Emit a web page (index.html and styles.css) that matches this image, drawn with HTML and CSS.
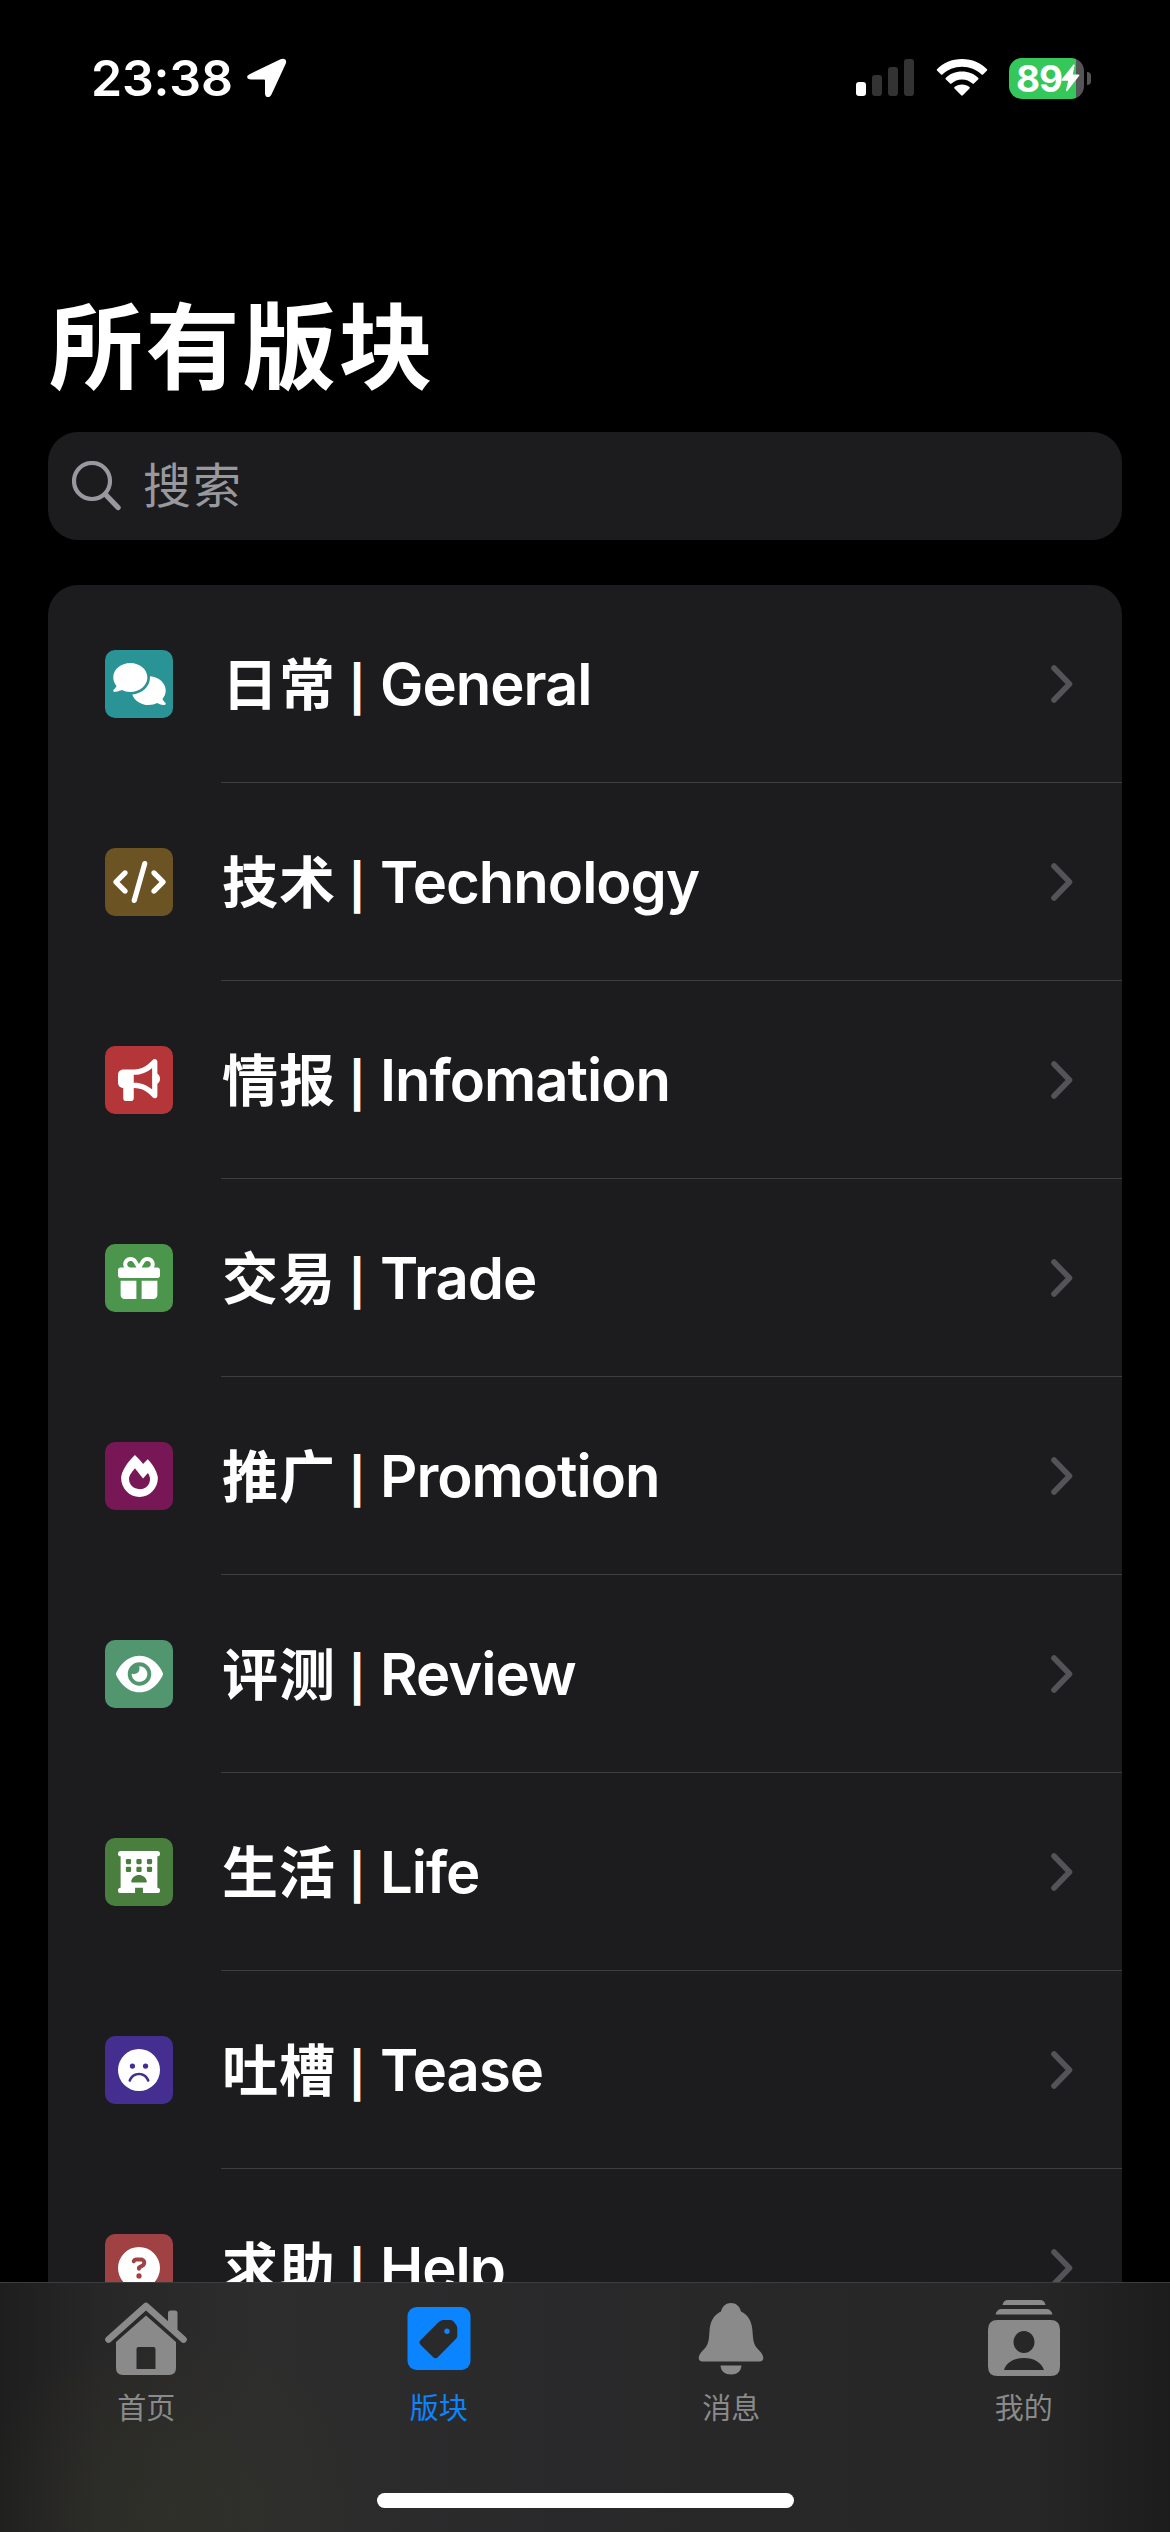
FILE: index.html
```html
<!DOCTYPE html>
<html lang="zh-CN">
<head>
<meta charset="utf-8">
<title>所有版块</title>
<link rel="stylesheet" href="styles.css">
</head>
<body>
<svg class="sprite" aria-hidden="true">
  <symbol id="chevron" viewBox="0 0 22 38"><path d="M3 3 18.500 19 3 35" fill="none" stroke="currentColor" stroke-width="5.600" stroke-linecap="round" stroke-linejoin="round"/></symbol>
</svg>
<div class="screen">
  <header class="status">
    <div class="clock">
      <span class="time">23:38</span>
      <svg class="location" width="40" height="40" viewBox="0 0 40 40"><path d="M2.500 16.200 33.500 1.200C37.500-.600 40.500 2.200 38.600 6L24.600 36.200C22.800 40.400 18 39.800 18 35.400V22.500Q18 21.600 17 21.600H4.200C-.400 21.600-1.200 18 2.500 16.200Z" fill="#fff"/></svg>
    </div>
    <div class="indicators">
      <svg class="signal" width="58" height="38" viewBox="0 0 58 38"><rect y="23" width="10" height="14" rx="3" fill="#fff"/><g fill="#333"><rect x="16" y="16" width="10" height="21" rx="3"/><rect x="32" y="8" width="10" height="29" rx="3"/><rect x="48" width="10" height="37" rx="3"/></g></svg>
      <svg class="wifi" width="52" height="38" viewBox="0 0 52 38" fill="#fff"><path d="M26 0C36.200 0 45 4 51 10.200Q51.600 10.900 51 11.500L47 15.500Q46.300 16.100 45.600 15.500C40.500 10.700 33.600 7.800 26 7.800S11.500 10.700 6.400 15.500Q5.700 16.100 5 15.500L1 11.500Q.400 10.900 1 10.200C7 4 15.800 0 26 0Z"/><path d="M26 12.600C32.600 12.600 38.300 15 42.300 19Q42.900 19.700 42.300 20.300L37.900 24.600Q37.200 25.200 36.500 24.600C33.700 22.100 30.200 20.500 26 20.500S18.300 22.100 15.500 24.600Q14.800 25.200 14.100 24.600L9.700 20.300Q9.100 19.700 9.700 19C13.700 15 19.400 12.600 26 12.600Z"/><path d="M26 25.400C29 25.400 31.600 26.400 33.500 28.100Q34.200 28.800 33.500 29.500L26.800 36.300Q26 37 25.200 36.300L18.500 29.500Q17.800 28.800 18.500 28.100C20.400 26.400 23 25.400 26 25.400Z"/></svg>
      <div class="battery">
        <div class="cell"><span class="level">89</span><svg class="bolt" width="19" height="28" viewBox="0 0 19 28"><path d="M12.500.500Q14 0 13.600 1.600L11.800 10.500H17.200Q19 10.600 18 12.100L6.500 26.800Q4.800 28.200 5.100 26L7.200 16.700H1.500Q-.100 16.500 1 15Z" fill="#fff"/></svg></div>
        <span class="nub"></span>
      </div>
    </div>
  </header>

  <main class="content">
    <h1 class="title">所有版块</h1>
    <div class="search">
      <svg width="50" height="50" viewBox="0 0 50 50" fill="none" stroke="#98989f" stroke-linecap="round"><circle cx="20" cy="20" r="18" stroke-width="4.200"/><path d="M33.500 33.500 46 46.500" stroke-width="5.400"/></svg>
      <span class="placeholder">搜索</span>
    </div>

    <ul class="list">
      <li class="row">
        <span class="tile teal"><svg width="53" height="42" viewBox="0 0 640 512"><path d="M208 352c114.900 0 208-78.800 208-176S322.900 0 208 0S0 78.800 0 176c0 38.600 14.700 74.300 39.600 103.400c-3.500 9.400-8.700 17.700-14.200 24.700c-4.800 6.200-9.700 11-13.300 14.300c-1.800 1.600-3.300 2.900-4.300 3.700l-1.300 1C1 327.200-1.400 334.400.8 340.900S9.100 352 16 352c21.800 0 43.800-5.600 62.100-12.500c9.200-3.500 17.800-7.400 25.300-11.400C134.100 343.300 169.800 352 208 352zM448 176c0 112.300-99.100 196.900-216.500 207C255.800 457.400 336.400 512 432 512c38.200 0 73.900-8.700 104.700-23.900c7.500 4 16 7.900 25.200 11.400c18.300 6.900 40.300 12.500 62.100 12.500c6.900 0 13.100-4.500 15.200-11.100c2.100-6.600-.2-13.800-5.800-17.900l-1.300-1c-1-.8-2.500-2-4.300-3.700c-3.600-3.300-8.500-8.100-13.300-14.300c-5.500-7-10.700-15.400-14.200-24.700c24.900-29 39.600-64.700 39.600-103.400c0-92.800-84.900-168.900-192.600-175.500c.4 5.100.6 10.300.6 15.500z"/></svg></span>
        <div class="cellbody"><span class="label"><span class="zh">日常</span> <span class="bar">|</span> General</span><svg class="chev"><use href="#chevron"/></svg></div>
      </li>
      <li class="row">
        <span class="tile brown"><svg width="53" height="42" viewBox="0 0 640 512"><path d="M392.800 1.200c-17-4.900-34.700 5-39.600 22l-128 448c-4.900 17 5 34.700 22 39.600s34.700-5 39.600-22l128-448c4.900-17-5-34.700-22-39.600zm80.600 120.100c-12.500 12.500-12.500 32.800 0 45.300L562.700 256l-89.400 89.400c-12.500 12.500-12.500 32.800 0 45.300s32.800 12.500 45.300 0l112-112c12.500-12.500 12.500-32.800 0-45.300l-112-112c-12.500-12.500-32.800-12.500-45.300 0zm-306.700 0c-12.500-12.500-32.800-12.500-45.300 0l-112 112c-12.500 12.500-12.500 32.800 0 45.300l112 112c12.500 12.500 32.800 12.500 45.300 0s12.500-32.800 0-45.300L77.300 256l89.400-89.400c12.500-12.500 12.500-32.800 0-45.300z"/></svg></span>
        <div class="cellbody"><span class="label"><span class="zh">技术</span> <span class="bar">|</span> Technology</span><svg class="chev"><use href="#chevron"/></svg></div>
      </li>
      <li class="row">
        <span class="tile red"><svg width="42" height="42" viewBox="0 0 512 512"><path d="M480 32c0-12.900-7.800-24.600-19.800-29.600s-25.700-2.200-34.900 6.900L381.700 53c-48 48-113.100 75-181 75H64c-35.300 0-64 28.700-64 64v96c0 35.300 28.700 64 64 64v128c0 17.700 14.300 32 32 32h64c17.700 0 32-14.300 32-32V352h8.700c67.900 0 133 27 181 75l43.600 43.600c9.200 9.200 22.900 11.900 34.900 6.900s19.800-16.600 19.800-29.600V300.400c18.600-8.800 32-32.500 32-60.400s-13.400-51.600-32-60.400V32zm-64 76.700V371.300C357.200 317.800 280.500 288 200.700 288H192V192h8.700c79.800 0 156.500-29.800 215.300-83.300z"/></svg></span>
        <div class="cellbody"><span class="label"><span class="zh">情报</span> <span class="bar">|</span> Infomation</span><svg class="chev"><use href="#chevron"/></svg></div>
      </li>
      <li class="row">
        <span class="tile green"><svg width="42" height="42" viewBox="0 0 512 512"><path d="M190.500 68.800L225.300 128H152c-22.100 0-40-17.900-40-40s17.900-40 40-40h2.200c14.900 0 28.800 7.900 36.300 20.800zM64 88c0 14.400 3.500 28 9.600 40H32c-17.700 0-32 14.300-32 32v64c0 17.700 14.300 32 32 32H480c17.700 0 32-14.300 32-32V160c0-17.700-14.300-32-32-32H438.400c6.100-12 9.600-25.600 9.600-40c0-48.600-39.400-88-88-88h-2.200c-31.900 0-61.500 16.900-77.700 44.400L256 85.500l-24.100-41C215.700 16.900 186.100 0 154.200 0H152C103.400 0 64 39.400 64 88zm336 0c0 22.100-17.900 40-40 40H286.700l34.800-59.200C329.100 55.900 342.900 48 357.800 48H360c22.100 0 40 17.900 40 40zM32 288V464c0 26.500 21.500 48 48 48H224V288H32zM288 512H432c26.500 0 48-21.500 48-48V288H288V512z"/></svg></span>
        <div class="cellbody"><span class="label"><span class="zh">交易</span> <span class="bar">|</span> Trade</span><svg class="chev"><use href="#chevron"/></svg></div>
      </li>
      <li class="row">
        <span class="tile magenta"><svg width="37" height="42" viewBox="0 0 448 512"><path d="M323.560 51.200c-20.800 19.300-39.580 39.590-56.220 59.970C240.080 73.620 206.280 35.530 168 0 69.740 91.170 0 209.960 0 281.600 0 408.850 100.290 512 224 512s224-103.150 224-230.400c0-53.270-51.980-163.140-124.440-230.400zm-19.470 340.650C282.430 407.010 255.720 416 226.860 416 154.710 416 96 368.260 96 290.750c0-38.610 24.310-72.630 72.790-130.750 6.930 7.980 98.830 125.340 98.830 125.340l58.630-66.880c4.140 6.850 7.910 13.550 11.270 19.970 27.350 52.190 15.810 118.970-33.430 153.420z"/></svg></span>
        <div class="cellbody"><span class="label"><span class="zh">推广</span> <span class="bar">|</span> Promotion</span><svg class="chev"><use href="#chevron"/></svg></div>
      </li>
      <li class="row">
        <span class="tile mint"><svg width="47" height="42" viewBox="0 0 576 512"><path d="M288 32c-80.800 0-145.500 36.800-192.600 80.600C48.600 156 17.300 208 2.500 243.700c-3.300 7.900-3.300 16.700 0 24.600C17.300 304 48.600 356 95.400 399.400C142.500 443.200 207.200 480 288 480s145.500-36.800 192.600-80.600c46.800-43.500 78.100-95.400 93-131.100c3.300-7.900 3.300-16.700 0-24.600c-14.900-35.700-46.200-87.700-93-131.100C433.500 68.800 368.800 32 288 32zM144 256a144 144 0 1 1 288 0 144 144 0 1 1-288 0zm144-64c0 35.300-28.700 64-64 64c-7.100 0-13.900-1.200-20.300-3.300c-5.500-1.800-11.900 1.600-11.700 7.400c.3 6.900 1.300 13.800 3.200 20.700c13.700 51.200 66.400 81.600 117.600 67.900s81.600-66.400 67.900-117.600c-11.100-41.500-47.800-69.400-88.600-71.100c-5.800-.2-9.200 6.100-7.400 11.700c2.100 6.400 3.300 13.200 3.300 20.300z"/></svg></span>
        <div class="cellbody"><span class="label"><span class="zh">评测</span> <span class="bar">|</span> Review</span><svg class="chev"><use href="#chevron"/></svg></div>
      </li>
      <li class="row">
        <span class="tile forest"><svg width="42" height="42" viewBox="0 0 512 512"><path fill-rule="evenodd" d="M32 0H480a32 32 0 0 1 0 64V448a32 32 0 0 1 0 64H304V448H208V512H32a32 32 0 0 1 0-64V64A32 32 0 0 1 32 0ZM112 96h32q16 0 16 16v32q0 16-16 16h-32q-16 0-16-16v-32q0-16 16-16ZM240 96h32q16 0 16 16v32q0 16-16 16h-32q-16 0-16-16v-32q0-16 16-16ZM368 96h32q16 0 16 16v32q0 16-16 16h-32q-16 0-16-16v-32q0-16 16-16ZM112 192h32q16 0 16 16v32q0 16-16 16h-32q-16 0-16-16v-32q0-16 16-16ZM240 192h32q16 0 16 16v32q0 16-16 16h-32q-16 0-16-16v-32q0-16 16-16ZM368 192h32q16 0 16 16v32q0 16-16 16h-32q-16 0-16-16v-32q0-16 16-16ZM176 384H336c8.800 0 17.200-7.200 15.100-15.800C340 320 302.200 292 256 292S172 320 160.900 368.200C158.800 376.800 167.200 384 176 384Z"/></svg></span>
        <div class="cellbody"><span class="label"><span class="zh">生活</span> <span class="bar">|</span> Life</span><svg class="chev"><use href="#chevron"/></svg></div>
      </li>
      <li class="row">
        <span class="tile violet"><svg width="42" height="42" viewBox="0 0 512 512"><path fill-rule="evenodd" d="M256 512A256 256 0 1 0 256 0a256 256 0 1 0 0 512zM159.300 388.700c-2.600 8.400-11.600 13.200-20 10.500s-13.200-11.600-10.500-20C145.200 326.100 196.300 288 256 288s110.800 38.100 127.300 91.300c2.600 8.400-2.100 17.400-10.500 20s-17.400-2.100-20-10.500C340.500 349.400 302.100 320 256 320s-84.500 29.400-96.700 68.700zM144 208a32 32 0 1 1 64 0 32 32 0 1 1-64 0zm192-32a32 32 0 1 1 0 64 32 32 0 1 1 0-64z"/></svg></span>
        <div class="cellbody"><span class="label"><span class="zh">吐槽</span> <span class="bar">|</span> Tease</span><svg class="chev"><use href="#chevron"/></svg></div>
      </li>
      <li class="row">
        <span class="tile brick"><svg width="42" height="42" viewBox="0 0 512 512"><path fill-rule="evenodd" d="M256 512A256 256 0 1 0 256 0a256 256 0 1 0 0 512zM169.800 165.300c7.900-22.300 29.100-37.300 52.800-37.300h58.300c34.900 0 63.100 28.300 63.100 63.100c0 22.600-12.100 43.500-31.700 54.800L280 264.400c-.2 13-10.900 23.600-24 23.600c-13.300 0-24-10.700-24-24V250.500c0-8.600 4.600-16.500 12.100-20.800l44.300-25.400c4.700-2.700 7.600-7.700 7.600-13.100c0-8.400-6.800-15.100-15.100-15.100H222.600c-3.400 0-6.400 2.100-7.500 5.300l-.4 1.200c-4.400 12.500-18.200 19-30.600 14.600s-19-18.200-14.600-30.600l.3-1.300zM224 352a32 32 0 1 1 64 0 32 32 0 1 1-64 0z"/></svg></span>
        <div class="cellbody"><span class="label"><span class="zh">求助</span> <span class="bar">|</span> Help</span><svg class="chev"><use href="#chevron"/></svg></div>
      </li>
    </ul>
  </main>

  <footer class="bottom">
    <nav class="tabs">
      <a class="tab"><svg width="84" height="78" viewBox="0 0 84 78" fill="#8a8a8a"><path d="M4.500 41.500 42 8 79.500 41.500" fill="none" stroke="#8a8a8a" stroke-width="6.600" stroke-linecap="round" stroke-linejoin="round"/><path d="M64 30V15q0-2.500 2.500-2.500h4.500q2.500 0 2.500 2.500v21Z"/><path fill-rule="evenodd" d="M42 17.500 72 44V70q0 7-7 7H19q-7 0-7-7V44ZM34.500 49q-2 0-2 2V71H51.500V51q0-2-2-2Z"/></svg><span>首页</span></a>
      <a class="tab active"><svg width="84" height="78" viewBox="0 0 84 78"><rect x="10.500" y="9" width="63" height="63" rx="9" fill="#0a84ff"/><path d="M46.500 22H53.500Q55.500 22 57 24L59.300 27Q60.300 28.500 60.300 30.500V37.500Q60.300 39.500 58.800 41L41 59Q38.500 61.500 36 59L23.500 46.800Q21.300 44.500 23.500 42.300L42 23.800Q44 22 46.500 22Z" fill="#2a2a2b"/><circle cx="50" cy="33.300" r="2.700" fill="#0a84ff"/></svg><span>版块</span></a>
      <a class="tab"><svg width="84" height="78" viewBox="0 0 84 78" fill="#8a8a8a"><path d="M32 13.500C33.500 8 37 5 42 5s8.500 3 10 8.500C59.500 17 63 24 63.500 33 64 41 64.500 46 67.500 49.500L72 54.500C75.500 59 75 63.500 70.500 63.500H13.500C9 63.500 8.500 59 12 54.500L16.500 49.500C19.500 46 20 41 20.500 33 21 24 24.500 17 32 13.500Z"/><path d="M31.500 67.500H52.500C52 73.500 48 76.500 42 76.500S32 73.500 31.500 67.500Z"/></svg><span>消息</span></a>
      <a class="tab"><svg width="84" height="78" viewBox="0 0 84 78" fill="#8a8a8a"><path d="M20.500 7Q21.500 2 26 2H58Q62.500 2 63.500 7ZM13.500 16.500Q15 11 19.500 11H64.500Q69 11 70.500 16.500Z"/><path fill-rule="evenodd" d="M15.500 22H68.500Q78 22 78 31.500V68.500Q78 78 68.500 78H15.500Q6 78 6 68.500V31.500Q6 22 15.500 22ZM42 33C36 33 31.500 38 31.500 44S36 55 42 55 52.500 50 52.500 44 48 33 42 33ZM22 72H62C59.500 64.500 52 60 42 60S24.500 64.500 22 72Z"/></svg><span>我的</span></a>
    </nav>
    <div class="home-indicator"></div>
  </footer>
</div>
</body>
</html>
```
FILE: styles.css
```css
* { box-sizing: border-box; }

body {
  margin: 0;
  background: #000;
  color: #fff;
  font-family: Inter, "Noto Sans CJK SC", sans-serif;
}

.sprite { display: none; }

svg { display: block; flex: none; }

.screen {
  width: 1170px;
  height: 2532px;
  display: flex;
  flex-direction: column;
  overflow: hidden;
  background: #000;
}

.status {
  flex: none;
  height: 282px;
  padding: 53px 79px 0 91px;
  display: flex;
  justify-content: space-between;
  align-items: flex-start;
}

.clock, .indicators { display: flex; align-items: center; height: 50px; }

.clock { gap: 16px; }

.time {
  width: 140px;
  font-size: 50px;
  font-weight: 600;
  line-height: 50px;
  letter-spacing: -0.2px;
  white-space: nowrap;
}

.signal { margin-right: 22px; }
.wifi { margin-right: 21px; }

.battery { display: flex; align-items: center; gap: 3px; }

.cell {
  width: 75px;
  height: 41px;
  padding-left: 7px;
  display: flex;
  align-items: center;
  border-radius: 13px;
  background: linear-gradient(90deg, #34c759 67px, #555557 67px);
}

.level {
  width: 45px;
  font-size: 37px;
  font-weight: 700;
  line-height: 41px;
  letter-spacing: -1px;
}

.nub { width: 4px; height: 13px; border-radius: 0 4px 4px 0; background: #555557; }

.content { flex: 1; min-height: 0; overflow: hidden; padding: 0 48px; }

.title {
  margin: 0 0 20px;
  height: 130px;
  padding-left: 1px;
  font-size: 94px;
  font-weight: 700;
  line-height: 132px;
  letter-spacing: 2.6px;
}

.search {
  height: 108px;
  margin-bottom: 45px;
  padding: 0 24px;
  display: flex;
  align-items: center;
  gap: 21px;
  border-radius: 30px;
  background: #1c1c1e;
}

.placeholder {
  color: #98989f;
  font-size: 48px;
  line-height: 60px;
  letter-spacing: 2px;
}

.list {
  margin: 0;
  padding: 0;
  list-style: none;
  border-radius: 30px 30px 0 0;
  background: #1c1c1e;
}

.row {
  height: 198px;
  padding-left: 57px;
  display: flex;
  gap: 48px;
}

.tile {
  flex: none;
  width: 68px;
  height: 68px;
  margin-top: 65px;
  display: flex;
  align-items: center;
  justify-content: center;
  border-radius: 10px;
  fill: #fff;
}

.teal { background: #2a9396; }
.brown { background: #6c5323; }
.red { background: #b53638; }
.green { background: #4b964c; }
.magenta { background: #781756; }
.mint { background: #51966f; }
.forest { background: #497e3f; }
.violet { background: #442e90; }
.brick { background: #a04143; }

.cellbody {
  flex: 1;
  padding-right: 49px;
  display: flex;
  align-items: center;
  justify-content: space-between;
  border-bottom: 1px solid #3d3d40;
}

.label {
  padding-top: 5px;
  padding-left: 1px;
  font-size: 58px;
  font-weight: 600;
  line-height: 80px;
  letter-spacing: -1px;
  word-spacing: -3px;
  white-space: nowrap;
}

.zh { font-size: 56px; font-weight: 700; letter-spacing: 1px; }

.bar { margin: 0 5px 0 2px; font-size: 45px; font-weight: 700; }

.chev { width: 22px; height: 38px; color: #545458; }

.bottom {
  flex: none;
  height: 250px;
  border-top: 1px solid #3d3d3f;
  background:
    radial-gradient(ellipse 200px 180px at 170px 230px, rgba(49, 50, 41, .7), transparent),
    linear-gradient(90deg, #1e1e1e, #282727 100px, #2d2d2d 260px, #29292b 580px, #282828 700px, #272728 1030px, #1c1c1c);
}

.tabs { display: grid; grid-template-columns: repeat(4, 1fr); height: 210px; }

.tab {
  padding-top: 15px;
  display: flex;
  flex-direction: column;
  align-items: center;
  gap: 11px;
  color: #8a8a8a;
  font-size: 29px;
  line-height: 44px;
}

.active { color: #0a84ff; }

.home-indicator {
  width: 417px;
  height: 15px;
  margin: 0 auto;
  border-radius: 8px;
  background: #fff;
}
```
